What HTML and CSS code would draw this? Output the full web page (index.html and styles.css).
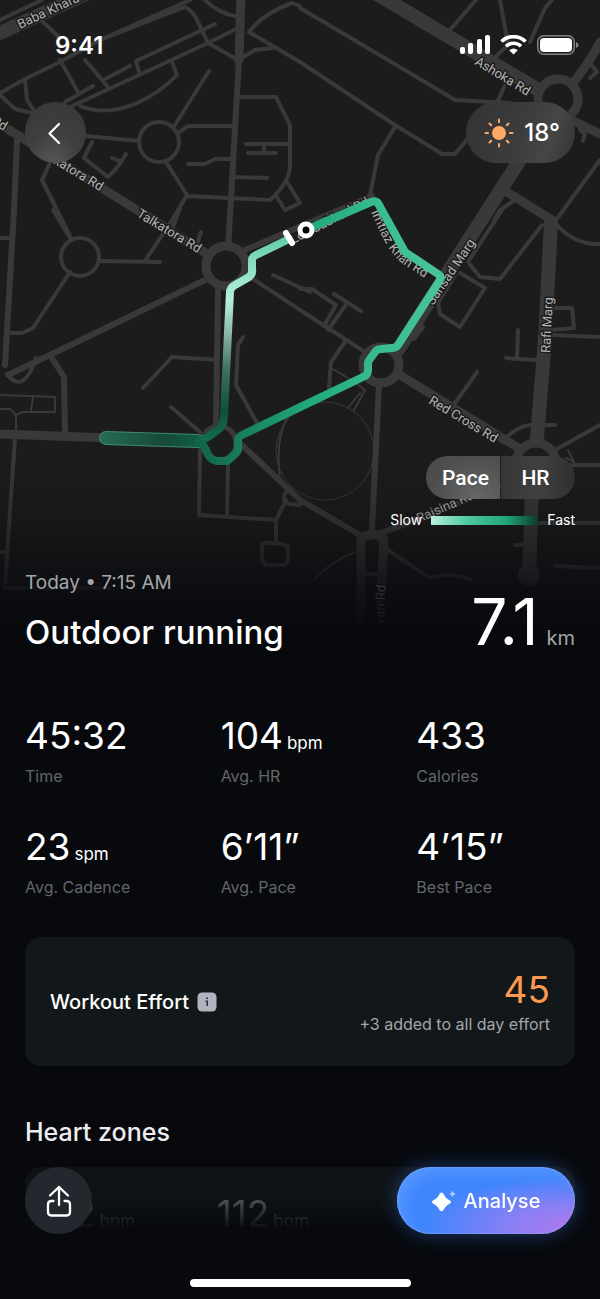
FILE: index.html
```html
<!DOCTYPE html>
<html lang="en">
<head>
    <meta charset="UTF-8">
    <meta name="viewport" content="width=device-width, initial-scale=1.0">
    <title>Outdoor running</title>
    <link rel="stylesheet" href="styles.css">
</head>
<body>

    <section class="hero">
        <svg class="map" viewBox="0 0 600 660" preserveAspectRatio="xMidYMin slice" aria-hidden="true">
            <defs>
                <linearGradient id="down" gradientUnits="userSpaceOnUse" x1="0" y1="240" x2="0" y2="440">
                    <stop offset="0" stop-color="#66cfa9"/>
                    <stop offset="0.1" stop-color="#84dabb"/>
                    <stop offset="0.3" stop-color="#b5f0da"/>
                    <stop offset="0.45" stop-color="#90bdaa"/>
                    <stop offset="0.65" stop-color="#3f705d"/>
                    <stop offset="0.85" stop-color="#0f5039"/>
                    <stop offset="1" stop-color="#146d4d"/>
                </linearGradient>
                <linearGradient id="loop" gradientUnits="userSpaceOnUse" x1="198" y1="0" x2="442" y2="0">
                    <stop offset="0" stop-color="#12634a"/>
                    <stop offset="0.2" stop-color="#19815c"/>
                    <stop offset="0.45" stop-color="#20a97c"/>
                    <stop offset="0.75" stop-color="#3abc92"/>
                    <stop offset="1" stop-color="#48c49b"/>
                </linearGradient>
                <linearGradient id="tail" gradientUnits="userSpaceOnUse" x1="100" y1="0" x2="205" y2="0">
                    <stop offset="0" stop-color="#276b54"/>
                    <stop offset="0.6" stop-color="#17493a"/>
                    <stop offset="1" stop-color="#116147"/>
                </linearGradient>
                <linearGradient id="fade" x1="0" y1="0" x2="0" y2="1">
                    <stop offset="0" stop-color="#07090d" stop-opacity="0"/>
                    <stop offset="0.35" stop-color="#07090d" stop-opacity="0.25"/>
                    <stop offset="0.75" stop-color="#07090d" stop-opacity="0.78"/>
                    <stop offset="1" stop-color="#07090d"/>
                </linearGradient>
            </defs>

            <rect width="600" height="660" fill="#1c1c1c"/>

            <!-- side streets -->
            <g class="road" stroke-width="4">
                <path d="M0 20L42 0M0 93L25 79L60 62L100 40L190 0M100 40L185 7Q192 10 197 20L208 43M205 0Q218 13 238 17"/>
                <path d="M70 107L208 43L240 27M85 60L108 87M105 79L130 66M139 72L136 61L215 24M60 60L78 92M65 102L93 86M25 79L27 100L35 112M0 95L15 109L32 113"/>
                <path d="M172 62L177 75Q160 93 135 104Q105 116 80 106M43 22L60 38M208 43L238 60L255 50L272 48M300 62L249 32Q262 14 292 3L300 6"/>
                <path d="M86 136L139 141M173 128L209 71M178 133L188 126H234M188 164H205L215 159H232M166 162L187 195L172 220L145 261M187 196L270 200Q290 182 290 165V125L276 97H240M246 144H290M264 144V153M248 153H276M234 177L267 178M287 182L300 203L285 210L277 197"/>
                <circle cx="159" cy="142" r="20"/>
                <path d="M92 142L84 158L108 177Q118 168 126 154M50 163L42 180L72 240M112 158L120 161"/>
                <path d="M300 8L415 76L455 100L510 103M300 62L395 125L442 154H455L475 130M450 30L476 0M500 0L508 45L490 62M552 0L545 8L530 42M395 127L378 155L370 195M505 85L497 103"/>
                <path d="M600 160L556 220M557 225Q575 245 600 244M502 210L468 262L480 277L500 279L542 225M460 273L485 288L460 327L440 314L438 303L455 275M552 308H572L574 328L552 330M552 335L600 337M518 330L517 358M506 358L536 360M477 372L455 403"/>
                <path d="M590 63L597 72L590 78M580 130L585 134L583 141M494 220L500 210L515 200"/>
                <path d="M250 277L300 310L365 352M273 275L310 292M300 289H312L336 305L324 326M334 294L361 311M347 303L328 330M345 342L331 362L329 388M416 322L423 327L414 339M201 232L196 248"/>
                <path d="M243 337L238 345L236 385L258 425M172 357L218 360M143 388L172 357M171 407L200 432"/>
                <path d="M53 210L70 238M70 272L33 328L22 333H7M100 261L160 262M170 235L180 208M0 238H12M8 374Q12 382 20 382Q30 378 36 358"/>
                <circle cx="80" cy="257" r="19"/>
                <path d="M15 438L5 585M0 552H6M5 588H110M200 450L199 515L276 520L286 500M228 465L227 517M276 520V543M262 544Q275 541 288 546V561L284 565H265L262 560ZM286 492Q280 502 290 504L300 505M286 492L290 490"/>
                <path d="M555 425H530Q515 427 502 442M600 425L555 450M570 465H600M533 523H600M385 548L430 578L448 574L470 579M515 545H530M555 566L600 568M365 574H380"/>
            </g>
            <g class="road" stroke-width="2">
                <path d="M0 395L55 397V412H22L16 415L10 409H0M33 397L31 411M16 415V434M287 418Q275 440 280 480M333 369Q352 380 365 390L354 410M360 393L348 408M355 552Q330 562 314 580M568 450L574 462L566 458"/>
                <circle cx="325" cy="451" r="49" stroke-width="1"/>
            </g>

            <!-- main roads -->
            <g class="road" stroke-width="6">
                <path d="M239 60L228 250M17 140L14 210L5 365M205 280L50 355L8 375M50 355L64 377L65 434M218 290L216 425M223 427L300 500L360 535M379 385L372 530M245 250L372 196M370 537L430 515L515 480"/>
            </g>
            <g class="road" stroke-width="9">
                <path d="M-5 121L105 190L220 262M241 -5L239 60M507 192L552 220M600 42Q590 62 570 87M555 112L600 134M395 372L530 455M0 434L110 438M361 620V540Q372 528 384 540L379 620"/>
            </g>
            <g class="road" stroke-width="14">
                <path d="M0 33L90 -8M370 -10L542 92M520 160L480 222L398 350M551 222L545 340L536 450M532 490L529 575"/>
                <circle cx="529" cy="575" r="6" stroke-width="10"/>
            </g>

            <!-- roundabouts -->
            <g class="road roundabout" stroke-width="9">
                <circle cx="226" cy="266" r="20"/>
                <circle cx="381" cy="365" r="18"/>
                <circle cx="558" cy="99" r="20"/>
                <circle cx="536" cy="463" r="20"/>
                <circle cx="219" cy="443" r="17" stroke-width="5"/>
            </g>

            <g class="street-name">
                <text transform="translate(20 29) rotate(-25)">Baba Kharak</text>
                <text transform="translate(-9 123) rotate(31)">Rd</text>
                <text transform="translate(38 154) rotate(31)">Talkatora Rd</text>
                <text transform="translate(136 216) rotate(31)">Talkatora Rd</text>
                <text transform="translate(474 64) rotate(31)">Ashoka Rd</text>
                <text transform="translate(293 244) rotate(-27)">Lok Sabhad Rd</text>
                <path id="imtiaz" d="M371 212L380 232Q391 255 403 264L445 291" fill="none" stroke="none"/>
                <text><textPath href="#imtiaz">Imtiaz Khan Rd</textPath></text>
                <text transform="translate(433 306) rotate(-56)">Sansad Marg</text>
                <text transform="translate(550 353) rotate(-87)">Rafi Marg</text>
                <text transform="translate(428 403) rotate(31)">Red Cross Rd</text>
                <text transform="translate(419 523) rotate(-24)">Raisina Rd</text>
                <text transform="translate(384 624) rotate(-88)">van Rd</text>
            </g>

            <rect y="460" width="600" height="175" fill="url(#fade)"/>
            <rect y="634" width="600" height="26" fill="#07090d"/>

            <!-- run track -->
            <g fill="none" stroke-linecap="round" stroke-linejoin="round">
                <path d="M106 438L198 441" stroke="#3d8a70" stroke-width="14"/>
                <path d="M106 438L198 441" stroke="url(#tail)" stroke-width="12"/>
                <path d="M200 441L208 437L220 428Q224 424 224 416L230 291Q231 287 235 285L249 277Q253 274 252 269V260Q252 257 256 255L287 240" stroke="url(#down)" stroke-width="8"/>
                <path d="M198 442Q203 443 206 450Q210 461 218 461H225Q228 461 231 458L236 453Q239 450 238 445V440Q238 437 242 435L365 376Q368 374 368 370V364Q368 361 370 359L375 352Q377 349 381 349L392 348Q396 348 398 345L440 280Q442 277 438 274L405 252L379 205Q377 200 371 202L306 230" stroke="url(#loop)" stroke-width="8"/>
                <path d="M286 233L292 243" stroke="#fff" stroke-width="6"/>
                <circle cx="306" cy="230" r="6" fill="#000" stroke="#fff" stroke-width="5"/>
            </g>
        </svg>

        <div class="status-bar">
            <time class="clock">9:41</time>
            <div class="status-icons">
                <svg width="30" height="20" viewBox="0 0 30 20" fill="#fff" aria-hidden="true">
                    <rect x="0" y="12" width="5" height="7" rx="2"/>
                    <rect x="8" y="8" width="5" height="11" rx="2"/>
                    <rect x="17" y="4" width="5" height="15" rx="2"/>
                    <rect x="25" y="0" width="5" height="19" rx="2"/>
                </svg>
                <svg width="27" height="20" viewBox="0 0 27 20" fill="none" stroke="#fff" stroke-width="3.6" aria-hidden="true">
                    <path d="M1.5 6.5C8 0 19 0 25.500 6.500M6 11.300C10 7.300 17 7.300 21 11.300"/>
                    <path d="M13.500 19.500L9.200 15.200Q13.500 11.800 17.800 15.200Z" fill="#fff" stroke="none"/>
                </svg>
                <svg width="42" height="20" viewBox="0 0 42 20" aria-hidden="true">
                    <rect x="0.800" y="0.800" width="36.400" height="18.400" rx="6" fill="none" stroke="#828282" stroke-width="1.500"/>
                    <rect x="3" y="3" width="32" height="14" rx="4" fill="#fff"/>
                    <path d="M39 7Q41.500 8 41.500 10T39 13Z" fill="#828282"/>
                </svg>
            </div>
        </div>

        <nav class="top-nav">
            <button type="button" class="back glass" aria-label="Back">
                <svg width="16" height="24" viewBox="0 0 16 24" fill="none" stroke="#fff" stroke-width="2.200" stroke-linecap="round" stroke-linejoin="round">
                    <path d="M11 3L1.500 12.500L11 22"/>
                </svg>
            </button>
            <div class="weather glass">
                <svg width="30" height="30" viewBox="0 0 30 30" stroke="#ffa867" stroke-width="2" stroke-linecap="round" aria-hidden="true">
                    <circle cx="15" cy="15" r="7" fill="#ffa867" stroke="none"/>
                    <path d="M15 1.500V4M15 26V28.500M1.500 15H4M26 15H28.500M5.500 5.500L7.200 7.200M22.800 22.800L24.500 24.500M5.500 24.500L7.200 22.800M22.800 7.200L24.500 5.500"/>
                </svg>
                <span>18°</span>
            </div>
        </nav>

        <div class="map-controls">
            <div class="toggle">
                <button type="button" class="toggle-item active" aria-pressed="true">Pace</button>
                <button type="button" class="toggle-item" aria-pressed="false">HR</button>
            </div>
            <div class="legend">
                <span>Slow</span>
                <span class="legend-bar"></span>
                <span>Fast</span>
            </div>
        </div>

        <header class="summary">
            <div>
                <p class="date">Today • 7:15 AM</p>
                <h1>Outdoor running</h1>
            </div>
            <p class="distance"><span>7.1</span><span class="distance-unit">km</span></p>
        </header>
    </section>

    <main class="content">
        <dl class="stats">
            <div class="stat"><dt>Time</dt><dd>45:32</dd></div>
            <div class="stat"><dt>Avg. HR</dt><dd>104<small>bpm</small></dd></div>
            <div class="stat"><dt>Calories</dt><dd>433</dd></div>
            <div class="stat"><dt>Avg. Cadence</dt><dd>23<small>spm</small></dd></div>
            <div class="stat"><dt>Avg. Pace</dt><dd>6’11”</dd></div>
            <div class="stat"><dt>Best Pace</dt><dd>4’15”</dd></div>
        </dl>

        <section class="effort">
            <h2>Workout Effort
                <button type="button" class="info" aria-label="About workout effort">
                    <svg width="20" height="20" viewBox="0 0 20 20">
                        <rect x="0.500" y="0.500" width="19" height="19" rx="4.500" fill="#b1b4bf"/>
                        <path d="M9.200 5.500H11V7H9.200ZM8.500 8.500H11V14H9.500V9.800H8.500Z" fill="#2c3036"/>
                    </svg>
                </button>
            </h2>
            <div class="effort-score">
                <strong>45</strong>
                <span>+3 added to all day effort</span>
            </div>
        </section>

        <section>
            <h2 class="zones-title">Heart zones</h2>
            <div class="zones">
                <p>92<small>bpm</small></p>
                <p>112<small>bpm</small></p>
            </div>
        </section>
    </main>

    <footer class="bottom-bar">
        <div class="actions">
            <button type="button" class="share" aria-label="Share">
                <svg width="26" height="34" viewBox="0 0 26 34" fill="none" stroke="#fff" stroke-width="2.300" stroke-linecap="round" stroke-linejoin="round">
                    <path d="M13 21V3M4 11.500L13 3L22 11.500M7.500 17H5.500Q2 17 2 20.500V28Q2 31.500 5.500 31.500H20.500Q24 31.500 24 28V20.500Q24 17 20.500 17H18.500"/>
                </svg>
            </button>
            <button type="button" class="analyse">
                <svg width="24" height="22" viewBox="0 0 24 22" fill="#fff" aria-hidden="true">
                    <path d="M9.500 2.500Q11 2.500 11.500 4Q13.500 8.500 18 10.500Q20 12 18 13.500Q13.500 15.500 11.500 20Q9.500 22.500 7.500 20Q5.500 15.500 1 13.500Q-1 12 1 10.500Q5.500 8.500 7.500 4Q8 2.500 9.500 2.500Z"/>
                    <path d="M20.500 0.500L21.500 3L24 4L21.500 5L20.500 7.500L19.500 5L17 4L19.500 3Z" opacity="0.65"/>
                </svg>
                Analyse
            </button>
        </div>
        <div class="home-indicator"></div>
    </footer>

</body>
</html>
```

FILE: styles.css
```css
* {
    box-sizing: border-box;
}

body {
    margin: 0;
    min-height: 100vh;
    background: #07090d;
    color: #fff;
    font-family: Inter, sans-serif;
}

h1, h2, p, dl, dd {
    margin: 0;
}

button {
    padding: 0;
    border: none;
    color: inherit;
    font-family: inherit;
    cursor: pointer;
}

svg {
    display: block;
}

/* map and header */

.hero {
    position: relative;
    display: flex;
    flex-direction: column;
    min-height: 654px;
    padding: 0 25px;
}

.map {
    position: absolute;
    top: 0;
    left: 0;
    width: 100%;
    height: 100%;
    z-index: -1;
}

.road {
    fill: none;
    stroke: #393939;
    stroke-linecap: round;
    stroke-linejoin: round;
}

.roundabout {
    fill: #1c1c1c;
}

.street-name {
    font-family: Roboto, sans-serif;
    font-size: 13px;
    fill: #b4b4b4;
    stroke: #1c1c1c;
    stroke-width: 3px;
    paint-order: stroke;
}

.status-bar {
    display: flex;
    justify-content: space-between;
    align-items: center;
    height: 90px;
    padding-left: 30px;
}

.clock {
    font-size: 24px;
    font-weight: 600;
}

.status-icons {
    display: flex;
    gap: 10px;
}

.status-icons svg:last-child {
    margin-right: -4px;
}

.top-nav {
    display: flex;
    justify-content: space-between;
    margin-top: 12px;
}

.glass {
    display: flex;
    align-items: center;
    justify-content: center;
    height: 61px;
    border-radius: 31px;
    background: radial-gradient(circle at 45% 95%, #555 0, #3f3f3f 40%, #373737 100%);
}

.back {
    width: 61px;
}

.weather {
    gap: 10px;
    padding: 0 15px 0 18px;
    background: linear-gradient(110deg, #333 0%, #3c3c3c 50%, #464646 75%, #333 100%);
    font-size: 24px;
    font-weight: 500;
}

.map-controls {
    display: flex;
    flex-direction: column;
    align-items: flex-end;
    gap: 12px;
    margin-top: auto;
}

.toggle {
    display: flex;
    gap: 1px;
    overflow: hidden;
    border-radius: 22px;
}

.toggle-item {
    width: 74px;
    height: 43px;
    padding-right: 5px;
    background: linear-gradient(90deg, #363636, #404040 50%, #303030);
    font-family: Roboto, sans-serif;
    font-size: 21px;
    font-weight: 500;
}

.toggle-item.active {
    padding: 0 0 0 5px;
    background: radial-gradient(circle at 70% 100%, #666 0, #4d4d4d 70%);
}

.legend {
    display: flex;
    align-items: center;
    gap: 9px;
    font-size: 14px;
    line-height: 18px;
}

.legend-bar {
    width: 107px;
    height: 9px;
    background: linear-gradient(90deg, #b5f0da, #4cc79f 35%, #20a67a 70%, #0c3a2a);
}

.summary {
    display: flex;
    justify-content: space-between;
    align-items: flex-end;
    margin-top: 40px;
}

.date {
    color: #a4a6aa;
    font-size: 19px;
    line-height: 28px;
}

h1 {
    margin-top: 13px;
    font-size: 33px;
    font-weight: 500;
    line-height: 44px;
}

.distance {
    display: flex;
    align-items: baseline;
    gap: 8px;
    font-size: 64px;
    line-height: 64px;
}

.distance-unit {
    color: #a4a6aa;
    font-size: 20px;
    line-height: 24px;
}

/* numbers */

.content {
    padding: 0 25px;
}

.stats {
    display: grid;
    grid-template-columns: repeat(3, 1fr);
    gap: 37px;
    padding-top: 60px;
}

.stat {
    display: flex;
    flex-direction: column-reverse;
    gap: 6px;
}

.stat dt {
    color: #63666a;
    font-size: 16px;
    line-height: 24px;
}

.stat dd,
.zones p {
    font-size: 37px;
    line-height: 44px;
}

small {
    margin-left: 4px;
    font-size: 17px;
    line-height: 20px;
}

.effort {
    display: flex;
    justify-content: space-between;
    align-items: center;
    margin-top: 38px;
    padding: 30px 25px;
    border-radius: 16px;
    background: #12171a;
}

.effort h2 {
    display: flex;
    align-items: center;
    gap: 8px;
    font-size: 20px;
    font-weight: 500;
}

.info {
    background: none;
}

.effort-score {
    display: flex;
    flex-direction: column;
    align-items: flex-end;
    color: #a4a6aa;
    font-size: 16px;
    line-height: 24px;
}

.effort-score strong {
    color: #fd994d;
    font-size: 37px;
    font-weight: 400;
    line-height: 45px;
}

.zones-title {
    margin-top: 48px;
    color: #eceef1;
    font-size: 25px;
    font-weight: 500;
    line-height: 36px;
}

.zones {
    display: grid;
    grid-template-columns: repeat(3, 1fr);
    margin-top: 17px;
    padding: 25px 25px 40px;
    border-radius: 16px;
    background: #1b2023;
    color: #c8c8c8;
    -webkit-mask-image: linear-gradient(#0006, #0006 30px, transparent 63px);
    mask-image: linear-gradient(#0006, #0006 30px, transparent 63px);
}

/* floating actions */

.bottom-bar {
    position: fixed;
    right: 0;
    bottom: 12px;
    left: 0;
    padding: 0 25px;
}

.actions {
    display: flex;
    justify-content: space-between;
}

.share {
    display: flex;
    align-items: center;
    justify-content: center;
    width: 67px;
    height: 67px;
    background: #23282e;
    border-radius: 50%;
}

.analyse {
    display: flex;
    align-items: center;
    justify-content: center;
    gap: 8px;
    width: 178px;
    height: 67px;
    border-radius: 34px;
    background: radial-gradient(ellipse at 100% 90%, #b277ee 0, #8c7ff4 25%, #3f86fd 60%);
    box-shadow: inset 0 0 2px #a9b8ff, inset 8px 8px 12px #62a0ff88, 0 0 20px #3f86fd66;
    font-size: 20px;
    font-weight: 500;
}

.home-indicator {
    width: 221px;
    height: 8px;
    margin: 45px auto 0;
    border-radius: 4px;
    background: #fff;
}
```
